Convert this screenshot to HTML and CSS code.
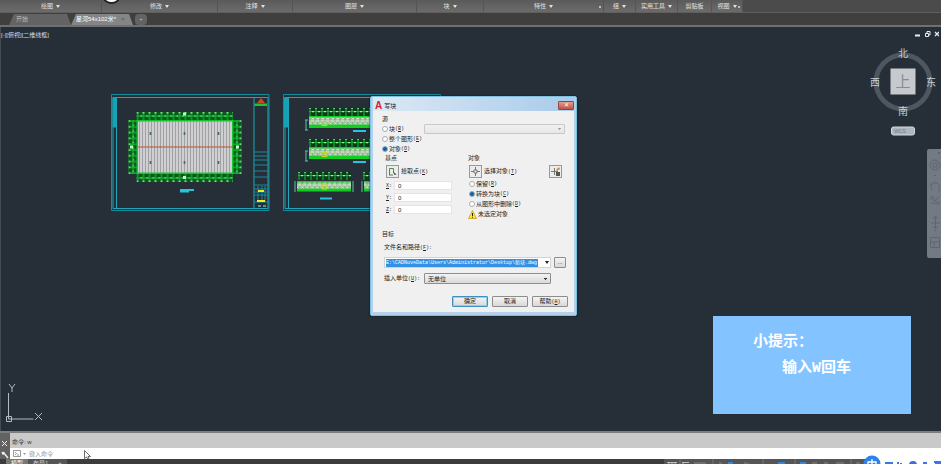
FILE: index.html
```
<!DOCTYPE html>
<html lang="zh-CN">
<head>
<meta charset="UTF-8">
<meta name="viewport" content="width=device-width, initial-scale=1.0">
<title>写块</title>
<link rel="stylesheet" href="styles.css">
</head>
<body>
<header class="ribbon">
    <button class="panel">绘图<i class="down"></i></button>
    <button class="panel">修改<i class="down"></i></button>
    <button class="panel">注释<i class="down"></i></button>
    <button class="panel">图层<i class="down"></i></button>
    <button class="panel">块<i class="down"></i></button>
    <button class="panel launcher">特性<i class="down"></i></button>
    <button class="panel">组<i class="down"></i></button>
    <button class="panel">实用工具<i class="down"></i></button>
    <button class="panel">剪贴板</button>
    <button class="panel launcher">视图<i class="down"></i></button>
    <span class="bubble"></span>
</header>
<nav class="tabs">
    <a class="tab" href="#">开始</a>
    <a class="tab active" href="#">星河54x102米*<span class="tab-close">×</span></a>
    <a class="tab add" href="#">+</a>
</nav>

<main class="canvas">
    <div class="view-bar">
        <span>[-][俯视][二维线框]</span>
        <svg class="win-icons" width="24" height="8" viewBox="0 0 24 8" fill="none" stroke="#e8ecef">
            <path d="M0 5.5h5" stroke-width="2"/>
            <path d="M10.5 3.5h3v3h-3zM12 3V1.500h3V5H14"/>
            <path d="M20 2l4 4M24 2l-4 4" stroke-width="1.300"/>
        </svg>
    </div>

    <!-- roof plan -->
    <svg class="sheet plan" width="159" height="117" viewBox="0 0 159 117">
        <defs>
            <pattern id="dimH" width="6" height="9" patternUnits="userSpaceOnUse" x="23.500" y="18">
                <rect width="6" height="9" fill="#085a1a"/>
                <path d="M3 0v9M0 4h6M0 8.500h6" stroke="#0cc42c" stroke-width="1.100"/>
                <path d="M2.200 0h1.600v1.500H2.200z" fill="#a8e8b0"/>
                <path d="M0 3.500h1.300v1.300H0z" fill="#c3dbc4"/>
            </pattern>
            <pattern id="dimV" width="9" height="5.800" patternUnits="userSpaceOnUse" x="17.500" y="24">
                <rect width="9" height="5.800" fill="#085a1a"/>
                <path d="M0 3h9M4.500 0v5.800M8.500 0v5.800" stroke="#0cc42c" stroke-width="1.100"/>
                <path d="M0 2.200h1.500v1.600H0zM4 .5h1.200v1.500H4z" fill="#a8e8b0"/>
            </pattern>
            <pattern id="sheeting" width="3" height="6" patternUnits="userSpaceOnUse">
                <rect width="3" height="6" fill="#cfcfd1"/>
                <path d="M1.500 0v6" stroke="#a0a0a5"/>
            </pattern>
        </defs>
        <g fill="none" stroke="#168b9b">
            <path d="M.5.5h157.500v116H.5z"/>
            <path d="M2 3.500h155v111H2zM5.500 3.500v111M143 3.500v111" stroke="#20a6b8"/>
            <path d="M143 58h14M143 62h14M143 66h14M143 71h14M143 77h14M143 83h14M143 91h14M143 101h14M143 108h14M147 92v16M151 92v16M154 92v16M143 95h14M143 98h14"/>
        </g>
        <path d="M1.500 3.500h4v30h-4z" fill="#15a3b7"/>
        <path d="M143.500 9.500h12.500v2.500h-12.500z" fill="#18c832"/>
        <path d="M146 9l4-5 4 5z" fill="#d2451c"/>
        <path d="M147 96h6v2h-6zM146 106h8v2h-8z" fill="#f3ea1f"/>
        <path d="M147 112h3M152 112h3" stroke="#b9e9ef"/>
        <path fill="url(#dimH)" d="M25.500 18h96.500v9H25.500z"/>
        <path fill="url(#dimH)" d="M25.500 18h96.500v9H25.500z" transform="translate(0 106) scale(1 -1)"/>
        <path fill="url(#dimV)" d="M17.500 26h9v54h-9z"/>
        <path fill="url(#dimV)" d="M17.500 26h9v54h-9z" transform="translate(148 0) scale(-1 1)"/>
        <path d="M26.500 27h95v52h-95z" fill="url(#sheeting)" stroke="#16c62e"/>
        <path d="M27 53h95" stroke="#b9542c" stroke-width="1.200"/>
        <path d="M39.500 38v3M73.500 38v3M107.500 38v3M39.500 67v3M73.500 67v3M107.500 67v3" stroke="#3f6c49" stroke-width="1.600"/>
        <path d="M19 51.500h3v3h-3zM72 18.500h3v3h-3zM72 82h3v3h-3zM125 51.500h3v3h-3z" fill="#c9efcd"/>
        <path d="M69 96h14M69 97.500h9" stroke="#28c4dc" stroke-width="2"/>
    </svg>

    <!-- elevations -->
    <svg class="sheet elevation" width="158" height="117" viewBox="0 0 158 117">
        <defs>
            <pattern id="axis" width="6" height="9" patternUnits="userSpaceOnUse">
                <rect width="6" height="9" fill="#0b3a1c"/>
                <path d="M1 0v9M0 3.500h6" stroke="#12b92e" stroke-width="1.100"/>
                <path d="M3 3h2v1.200H3zM.5 0h1.200v1H.5z" fill="#a8e8b0"/>
            </pattern>
            <pattern id="wall" width="5" height="7" patternUnits="userSpaceOnUse">
                <rect width="5" height="7" fill="#a9c5a6"/>
                <path d="M0 2l2 2 3-3M0 6h3" stroke="#e4ece2" stroke-width=".8" fill="none"/>
                <path d="M3 4h2M1 1h1" stroke="#4c9e54" stroke-width=".8"/>
            </pattern>
            <g id="facade">
                <path d="M0 12v10M-1 12h3M-1 22h3" stroke="#55c8a6"/>
                <path d="M3 9h70v10H3z" fill="url(#wall)"/>
                <path d="M3 16.500h70v3.500H3zM3 8h70v1.500H3z" fill="#10cf20"/>
                <path d="M16 13.500h5v4h-5z" fill="none" stroke="#cbd22a"/>
            </g>
        </defs>
        <g fill="none" stroke="#168b9b">
            <path d="M.5.5h157v116H.5z"/>
            <path d="M2 3.500h154v111H2zM5.500 3.500v111" stroke="#20a6b8"/>
        </g>
        <path d="M1 3.500h4.500v30H1z" fill="#15a3b7"/>
        <g transform="translate(26 14)">
            <path d="M0 0h72v8H0z" fill="url(#axis)"/>
            <use href="#facade" x="-3"/>
        </g>
        <g transform="translate(26 45)">
            <path d="M0 0h72v8H0z" fill="url(#axis)"/>
            <use href="#facade" x="-3"/>
        </g>
        <g transform="translate(15 78)">
            <path d="M0 0h53v8H0z" fill="url(#axis)"/>
            <path d="M-1 10h54v9H-1z" fill="url(#wall)"/>
            <path d="M-1 16.500h54v3H-1zM-1 9h54v1.500H-1z" fill="#10cf20"/>
            <path d="M24 12h5v5h-5z" fill="none" stroke="#cbd22a"/>
            <path d="M-3 9v11M55 9v11" stroke="#55c8a6"/>
        </g>
        <g transform="translate(80 78)">
            <path d="M0 0h40v8H0z" fill="url(#axis)"/>
            <path d="M1 10h40v9H1z" fill="url(#wall)"/>
            <path d="M1 16.500h40v3H1zM1 9h40v1.500H1z" fill="#10cf20"/>
            <path d="M-1 9v11" stroke="#55c8a6"/>
        </g>
        <path d="M70 37h13M70 68h13M37 104.500h12" stroke="#28c4dc" stroke-width="2"/>
    </svg>

    <svg class="view-cube" width="71" height="96" viewBox="0 0 71 96">
        <circle cx="33" cy="36" r="27" fill="none" stroke="#4e5760" stroke-width="5"/>
        <path d="M20.500 22.500h25v26h-25z" fill="#c6cacd"/>
        <text x="33" y="41" font-size="15" fill="#858d96">上</text>
        <g font-size="10" fill="#c9cfd3">
            <text x="33" y="11">北</text>
            <text x="33" y="69">南</text>
            <text x="5" y="40">西</text>
            <text x="61" y="40">东</text>
        </g>
        <rect x="21.500" y="81" width="23" height="8" rx="2" fill="#aeb5bd" stroke="#d3d7db"/>
        <text x="30" y="87" font-size="5" fill="#727b84">WCS</text>
    </svg>

    <svg class="nav-bar" width="14" height="110" viewBox="0 0 14 110" fill="none" stroke="#5f666f">
        <rect width="20" height="109" rx="2" fill="#747a83" stroke="none"/>
        <path d="M11 3l2 2M13 3l-2 2"/>
        <circle cx="8" cy="16" r="5"/><path d="M6 14h4v4H6z"/>
        <path d="M7 26l1 1 1-1M7 54l1 1 1-1M7 81l1 1 1-1"/>
        <path d="M5 41c-3-5 1-8 4-7 3 0 4 3 3 6M4 37v-3M11 41l2 1"/>
        <path d="M4 48l8 7M12 48l-8 7M4 51v-3h3M12 52v3H9"/>
        <path d="M4 74h9M8.500 68v11M6 70l2.500-3 2.500 3M6 77l2.500 3 2.500-3"/>
        <path d="M3.500 88.500h9v10h-9zM3.500 93h9M7 93v5"/>
    </svg>

    <svg class="ucs" width="40" height="42" viewBox="0 0 40 42" fill="none" stroke="#b3bbc1">
        <path d="M4.500 11v26h25M2.500 34.500h5v5h-5z"/>
        <path d="M5 2l3 4 3-4M8 6v4M31 31l7 7M38 31l-7 7"/>
    </svg>

    <aside class="hint">
        <p>小提示：</p>
        <p class="indent">输入<span class="latin">W</span>回车</p>
    </aside>

    <form class="dialog">
        <div class="title">
            <span class="logo">A</span>
            <span>写块</span>
            <button type="button" class="close" aria-label="关闭">✕</button>
        </div>
        <div class="body">
            <fieldset class="source">
                <legend>源</legend>
                <div class="radios">
                    <label><input type="radio" name="source">块<kbd>(<u>B</u>)</kbd></label>
                    <label><input type="radio" name="source">整个图形<kbd>(<u>E</u>)</kbd></label>
                    <label><input type="radio" name="source" checked>对象<kbd>(<u>O</u>)</kbd></label>
                </div>
                <select class="block-name" aria-label="块" disabled><option></option></select>
            </fieldset>
            <div class="columns">
                <fieldset>
                    <legend>基点</legend>
                    <div class="pick">
                        <button type="button" class="tool" id="pick">
                            <svg width="9" height="9" viewBox="0 0 9 9" fill="none"><path d="M1.500 8V1.500h4V6" stroke="#4d8b42"/><path d="M1 8h4" stroke="#4d8b42"/><path d="M5 4.500l3.500 3-2 .5z" fill="#444"/></svg>
                        </button>
                        <label for="pick">拾取点<kbd>(<u>K</u>)</kbd></label>
                    </div>
                    <div class="coords">
                        <label for="x"><u>X</u>:</label><input type="text" id="x" value="0">
                        <label for="y"><u>Y</u>:</label><input type="text" id="y" value="0">
                        <label for="z"><u>Z</u>:</label><input type="text" id="z" value="0">
                    </div>
                </fieldset>
                <fieldset>
                    <legend>对象</legend>
                    <div class="pick">
                        <button type="button" class="tool" id="select">
                            <svg width="9" height="9" viewBox="0 0 9 9" fill="none" stroke="#777"><path d="M4.500 0v9M0 4.500h9"/><path d="M3 3h3v3H3z" fill="#eee"/></svg>
                        </button>
                        <label for="select">选择对象<kbd>(<u>T</u>)</kbd></label>
                        <button type="button" class="tool quick" aria-label="快速选择">
                            <svg width="9" height="9" viewBox="0 0 9 9" fill="none"><path d="M3.500 1v7M0 4.500h7" stroke="#777"/><path d="M5 5h4v4H5z" fill="#555"/><path d="M5 3l3-3 1 2-3 2z" fill="#c88a38"/></svg>
                        </button>
                    </div>
                    <div class="radios">
                        <label><input type="radio" name="objects">保留<kbd>(<u>R</u>)</kbd></label>
                        <label><input type="radio" name="objects" checked>转换为块<kbd>(<u>C</u>)</kbd></label>
                        <label><input type="radio" name="objects">从图形中删除<kbd>(<u>D</u>)</kbd></label>
                    </div>
                    <p class="warning">
                        <svg width="9" height="9" viewBox="0 0 9 9"><path d="M4.500.5l4 8h-8z" fill="#ffe438" stroke="#b69a12" stroke-width=".7"/><path d="M4.500 3v3M4.500 6.700v1" stroke="#222"/></svg>
                        未选定对象
                    </p>
                </fieldset>
            </div>
            <fieldset class="target">
                <legend>目标</legend>
                <label class="path-label" for="path">文件名和路径<kbd>(<u>F</u>):</kbd></label>
                <div class="path-row">
                    <div class="combo">
                        <input type="text" id="path" value="E:\CADNoveData\Users\Administrator\Desktop\新块.dwg">
                        <i class="down"></i>
                    </div>
                    <button type="button" class="browse">...</button>
                </div>
                <div class="unit-row">
                    <label for="unit">插入单位<kbd>(<u>U</u>):</kbd></label>
                    <select id="unit"><option>无单位</option></select>
                </div>
            </fieldset>
            <div class="actions">
                <button type="button" class="default">确定</button>
                <button type="button">取消</button>
                <button type="button">帮助<kbd>(<u>H</u>)</kbd></button>
            </div>
        </div>
    </form>
</main>

<section class="command">
    <div class="grip">
        <svg width="10" height="26" viewBox="0 0 10 26" fill="none" stroke="#eee"><path d="M2 8l5 5M7 8l-5 5"/><path d="M3 19l5 6M2 19l1 2 2-1" stroke-width="1.500"/></svg>
    </div>
    <div class="lines">
        <p class="history">命令: w</p>
        <div class="prompt">
            <svg width="13" height="7" viewBox="0 0 13 7" fill="none" stroke="#999"><path d="M.5.5h7v6h-7zM2 2l1.500 1.500L2 5M4 5h2"/><path d="M10 3h3l-1.500 2z" fill="#999" stroke="none"/></svg>
            <input type="text" placeholder="键入命令" aria-label="命令">
        </div>
    </div>
    <svg class="cursor" width="7" height="10" viewBox="0 0 7 10"><path d="M.5.5v8l2-1.500 1.500 2.500 1-.5-1-2.500h2.500z" fill="#fff" stroke="#444" stroke-width=".8"/></svg>
</section>

<footer class="status">
    <a class="layout active" href="#">模型</a>
    <a class="layout" href="#">布局1</a>
    <a class="layout" href="#">+</a>
    <svg class="tray" width="277" height="8" viewBox="0 0 277 8" fill="none" stroke="#bbb">
        <path d="M0 0h210v8H0z" fill="#555" stroke="none"/>
        <path d="M3 3.500h10M5 4v4M8 4v4M11 4v4M18 3.500h7M19 4v4"/>
        <path d="M16 0v8M49 0v8M99 0v8M131 0v8M187 0v8" stroke="#777"/>
        <path d="M30 4h12M55 4h3M80 4h3M84 4v4M148 4h5M160 4h4M172 4h8M192 4h4" stroke="#888"/>
        <path d="M64 4h5M114 4h7M136 4h6" stroke="#3385d7" stroke-width="2"/>
        <path d="M208 0h69v8h-69z" fill="#fff" stroke="none"/>
        <path d="M221 4h8M234 3v3M236 5h2M259 4h4M270 3h7M271 5h6" stroke="#3b77e8" stroke-width="2"/>
        <circle cx="249" cy="6" r="4" fill="#3b6fe0" stroke="none"/>
    </svg>
    <svg class="ime" width="18" height="18" viewBox="0 0 18 18"><circle cx="9" cy="9" r="8.500" fill="#2d82ec"/><path d="M9 4v10M5 7h8v4H5z" fill="none" stroke="#fff" stroke-width="1.300"/></svg>
</footer>
</body>
</html>
```
FILE: styles.css
```
* {
    box-sizing: border-box;
}
body {
    margin: 0;
    height: 100vh;
    display: flex;
    flex-direction: column;
    overflow: hidden;
    font: 6px/10px "Liberation Sans", "Noto Sans CJK SC", sans-serif;
    background: #3f3f3f;
}
p, fieldset, legend {
    margin: 0;
    padding: 0;
    border: 0;
}
button, input, select, kbd {
    font: inherit;
    color: inherit;
    margin: 0;
    padding: 0;
}
a {
    color: inherit;
    text-decoration: none;
}
kbd {
    font: 5px/10px "Liberation Mono", monospace;
}
.down {
    border: 2px solid transparent;
    border-top: 3px solid currentColor;
    border-bottom: 0;
    margin-left: 3px;
}

/* ribbon and file tabs */
.ribbon {
    position: relative;
    display: grid;
    grid-template-columns: 102px 116px 75px 124px 67px 120px 32px 42px 34px 31px;
    height: 13px;
    color: #e2e2e2;
    background: #4b4b4b;
    border-bottom: 1px solid #5f5f5f;
}
.panel {
    position: relative;
    display: flex;
    align-items: center;
    justify-content: center;
    white-space: nowrap;
    border: 0;
    border-right: 1px solid #555;
    background: linear-gradient(#5a5a5a, #6b6b6b);
}
.launcher::after {
    content: "";
    position: absolute;
    right: 2px;
    top: 6px;
    width: 2px;
    height: 2px;
    background: #bbb;
}
.bubble {
    position: absolute;
    left: 103px;
    top: -9px;
    width: 17px;
    height: 13px;
    border: 2px solid #222;
    border-radius: 50%;
    background: #fff;
}
.tabs {
    display: flex;
    height: 14px;
    padding: 1px 0 0 9px;
    background: #403f3e;
    border-bottom: 2px solid #6c7070;
}
.tab {
    width: 62px;
    padding-left: 7px;
    color: #bbb;
    background: #636363;
    clip-path: polygon(5px 0, 58px 0, 100% 100%, 0 100%);
}
.tab.active {
    color: #fff;
    background: #858585;
    padding-left: 5px;
}
.tab-close {
    margin-left: 5px;
    color: #555;
}
.tab.add {
    width: 12px;
    padding: 0;
    margin-left: 2px;
    text-align: center;
    clip-path: none;
    border-radius: 4px;
}

/* drawing area */
.canvas {
    position: relative;
    flex: 1;
    min-height: 0;
    background: #262f37;
    border-left: 1px solid #454b50;
}
.view-bar {
    display: flex;
    justify-content: space-between;
    padding: 3px 2px 0 0;
    color: #d8dde0;
}
.sheet, .view-cube, .nav-bar, .ucs, .hint, .dialog {
    position: absolute;
}
.plan {
    left: 110px;
    top: 67px;
}
.elevation {
    left: 282px;
    top: 67px;
}
.view-cube {
    right: 0;
    top: 19px;
    text-anchor: middle;
}
.nav-bar {
    right: 0;
    top: 122px;
}
.ucs {
    left: 3px;
    bottom: 7px;
}
.hint {
    right: 30px;
    bottom: 17px;
    width: 198px;
    height: 98px;
    padding: 12px 40px;
    font-size: 15px;
    font-weight: bold;
    line-height: 26px;
    color: #fff;
    background: #83c3ff;
}
.hint .indent {
    padding-left: 29px;
    white-space: nowrap;
}
.hint .latin {
    font-family: "Liberation Mono", monospace;
}

/* write block dialog */
.dialog {
    left: 369px;
    top: 69px;
    width: 207px;
    color: #222;
    background: #b4d1ec;
    border: 1px solid #7fbfe0;
    padding: 0 2px 3px;
    border-radius: 2px;
    box-shadow: 0 0 2px #0b1117;
}
.title {
    display: flex;
    align-items: center;
    gap: 2px;
    height: 14px;
    padding: 3px 0 0 2px;
    background: linear-gradient(90deg, #dce9f5, #a9cbea);
}
.logo {
    color: #d3222a;
    font-size: 10px;
    font-weight: bold;
}
.close {
    width: 16px;
    height: 9px;
    margin-left: auto;
    line-height: 7px;
    color: #fff;
    background: linear-gradient(#dfa196, #c0523f);
    border: 1px solid #8e4a40;
    border-radius: 1px;
}
.body {
    padding: 3px 5px 5px 9px;
    background: #f0f0f0;
}
legend, .radios label {
    line-height: 10px;
    height: 10px;
}
.radios label {
    display: flex;
    align-items: center;
    white-space: nowrap;
}
.body label {
    white-space: nowrap;
}
input[type="radio"] {
    appearance: none;
    width: 6px;
    height: 6px;
    margin-right: 1px;
    border: 1px solid #a8adb2;
    border-radius: 50%;
    background: #fff;
}
input[type="radio"]:checked {
    background: #1c5c93;
    border-color: #8fb2cc;
}
.source {
    display: grid;
    grid-template-columns: 42px 1fr;
    margin-bottom: -1px;
}
select {
    appearance: none;
    height: 11px;
    padding: 0 3px;
    border: 1px solid #8e8e8e;
    border-radius: 1px;
    background: linear-gradient(to bottom right, #333 50%, transparent 50%) no-repeat right 2px center / 2px 2px, linear-gradient(to bottom left, #333 50%, transparent 50%) no-repeat right 4px center / 2px 2px, linear-gradient(#f2f2f2, #dadada);
}
.block-name {
    height: 10px;
    margin-right: 4px;
    opacity: .4;
}
.columns {
    display: grid;
    grid-template-columns: 83px 1fr;
    padding-left: 3px;
}
.pick {
    display: flex;
    align-items: center;
    gap: 2px;
    margin-top: 2px;
    padding: 0 7px 0 1px;
}
.tool {
    display: grid;
    place-items: center;
    width: 13px;
    height: 13px;
    border: 1px solid #999;
    background: #ececec;
}
.quick {
    margin-left: auto;
}
.coords {
    display: grid;
    grid-template-columns: 8px 58px;
    grid-auto-rows: 9px;
    gap: 3px 0;
    padding: 3px 0 0 1px;
}
.coords label {
    font-family: "Liberation Mono", monospace;
    font-size: 5px;
}
.coords input {
    width: 100%;
    padding-left: 3px;
    border: 1px solid #e4e4e4;
    background: #fff;
}
.columns .radios {
    padding: 1px 0 0 1px;
}
.warning {
    display: flex;
    align-items: center;
    gap: 1px;
}
.target {
    margin-top: 10px;
}
.path-label {
    display: block;
    margin: 3px 0 4px 2px;
}
.path-row, .unit-row {
    display: flex;
    padding-left: 2px;
}
.path-row {
    gap: 3px;
    margin-bottom: 5px;
}
.combo {
    display: flex;
    align-items: center;
    width: 167px;
    height: 11px;
    padding: 0 1px;
    background: #fff;
    border: 1px solid #d2d2d2;
}
.combo input {
    width: 152px;
    height: 8px;
    border: 0;
    font: 5px/8px "Liberation Mono", "Noto Sans CJK SC", monospace;
    color: #fff;
    background: #3390e4;
}
.combo .down {
    margin-left: 7px;
}
.unit-row label {
    width: 40px;
}
.unit-row select {
    width: 127px;
}
.browse, .actions button {
    height: 11px;
    line-height: 9px;
    border: 1px solid #8c8c8c;
    border-radius: 1px;
    background: linear-gradient(#f4f4f4, #d8d8d8);
}
.browse {
    width: 12px;
}
.actions {
    display: flex;
    justify-content: flex-end;
    gap: 4px;
    margin-top: 12px;
    padding-right: 1px;
}
.actions button {
    width: 36px;
}
.actions kbd {
    line-height: 9px;
}
.actions .default {
    border-color: #3c8fc0;
    box-shadow: inset 0 0 0 1px #8fd3f2;
}

/* command line */
.command {
    position: relative;
    display: flex;
    height: 28px;
    border-top: 2px solid #7d7d7d;
}
.grip {
    width: 10px;
    background: #626262;
}
.lines {
    flex: 1;
}
.history {
    height: 15px;
    padding: 4px 0 0 2px;
    color: #333;
    background: #c9c9c9;
}
.prompt {
    display: flex;
    align-items: center;
    gap: 3px;
    height: 11px;
    padding-left: 3px;
    background: #fff;
}
.prompt input {
    flex: 1;
    height: 10px;
    border: 0;
    outline: 0;
}
.prompt input::placeholder {
    color: #999;
}
.cursor {
    position: absolute;
    left: 84px;
    top: 17px;
}

/* layout tabs and tray */
.status {
    position: relative;
    display: flex;
    height: 5px;
    padding-left: 6px;
    line-height: 8px;
    color: #ccc;
    background: #3c3c3c;
}
.layout {
    height: 8px;
    padding: 0 5px;
    background: #555;
}
.layout.active {
    color: #fff;
    background: #777;
}
.tray {
    margin-left: auto;
}
.ime {
    position: absolute;
    right: 60px;
    top: -4px;
}
```
